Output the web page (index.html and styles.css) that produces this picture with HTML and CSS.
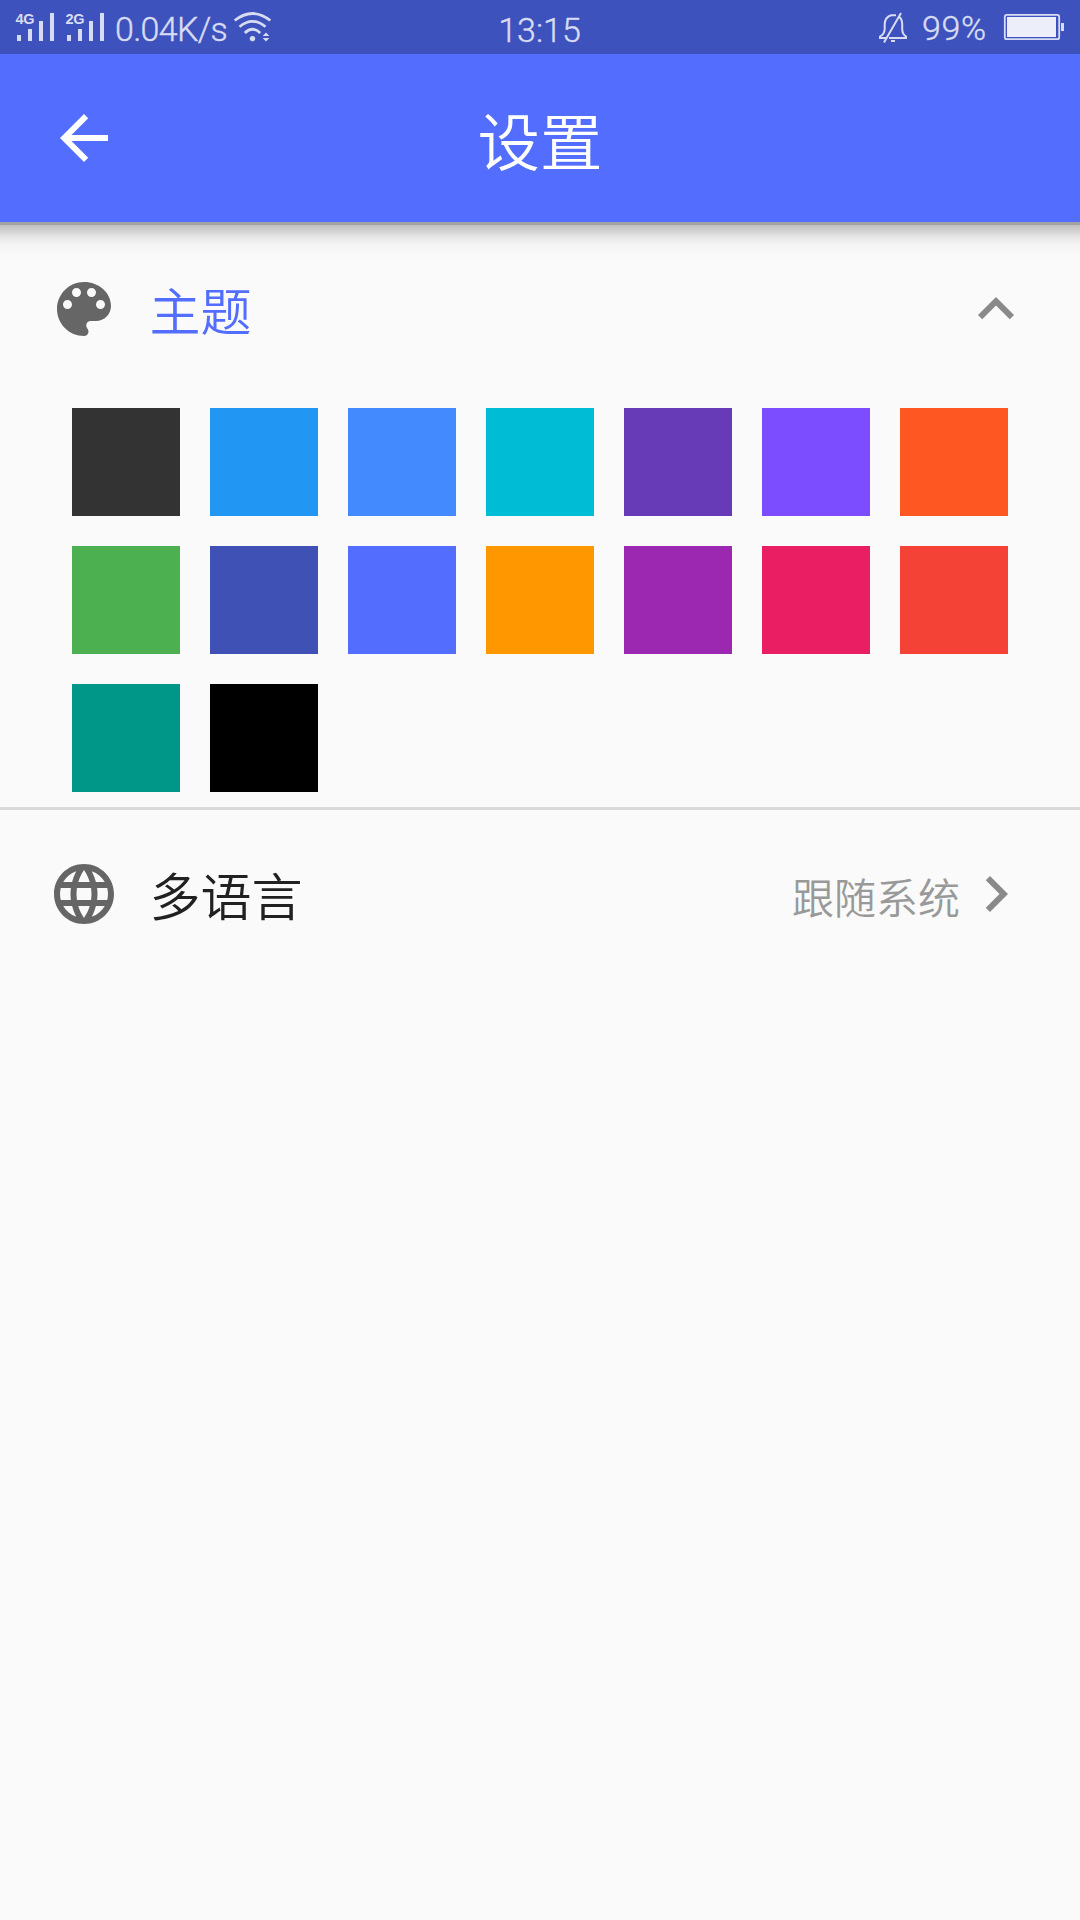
FILE: index.html
```html
<!DOCTYPE html>
<html lang="zh-CN">
<head>
<meta charset="utf-8">
<title>设置</title>
<link rel="stylesheet" href="styles.css">
</head>
<body>
<div class="status">
  <div class="status-side">
    <svg class="signals" width="92" height="54" viewBox="14 0 92 54" fill="currentColor">
      <text class="net" x="15.500" y="24">4G</text>
      <path d="M17 35h4v6h-4zM28 29h4v12h-4zM39 21h4v20h-4zM50 13h4v28h-4z"/>
      <text class="net" x="65.500" y="24">2G</text>
      <path d="M67 35h4v6h-4zM78 29h4v12h-4zM89 21h4v20h-4zM100 13h4v28h-4z"/>
    </svg>
    <span class="reading speed">0.04K/s</span>
    <svg class="wifi" width="40" height="54" viewBox="232 0 40 54" fill="none" stroke="currentColor" stroke-width="2.700">
      <path d="M234.700 20.500Q252.500 6.500 270.300 20.500M239.500 26.700Q252.500 16 265.500 26.700M244.800 33Q252.500 25.500 260.200 33"/>
      <circle cx="252.500" cy="38.600" r="2.700" fill="currentColor" stroke="none"/>
      <path d="M262.700 36l3.300-3.500 3.300 3.500zM262.700 38l3.300 3.500 3.300-3.500z" fill="currentColor" stroke="none"/>
    </svg>
  </div>
  <span class="reading clock">13:15</span>
  <div class="status-side status-end">
    <svg width="30" height="54" viewBox="878 0 30 54" fill="none" stroke="currentColor" stroke-width="2">
      <path d="M889 38H906V36.500Q902.200 34 902.200 29V24Q902 18.500 898.500 16.200M896 15.200H891Q884.800 17.500 884.700 24V29Q884.500 34 880 36.500V38H886M884 42.500L901 13M891 41h4"/>
    </svg>
    <span class="reading level">99%</span>
    <svg width="62" height="54" viewBox="1003 0 62 54">
      <rect x="1004.800" y="14.800" width="54.400" height="24.400" rx="2" fill="none" stroke="currentColor" stroke-width="1.800"/>
      <path d="M1007 17h49v20h-49z" fill="#eceef9"/>
      <path d="M1061 23h3v8h-3z" fill="currentColor"/>
    </svg>
  </div>
</div>
<header class="appbar">
  <svg class="icon" viewBox="0 0 24 24"><path d="M20 11H7.830l5.590-5.590L12 4l-8 8 8 8 1.410-1.410L7.830 13H20v-2z"/></svg>
  <h1 class="title">设置</h1>
</header>
<main>
  <section class="theme">
    <div class="row">
      <svg class="icon" viewBox="0 0 24 24"><path d="M12 3c-4.970 0-9 4.030-9 9s4.030 9 9 9c.83 0 1.500-.67 1.500-1.500 0-.39-.15-.74-.39-1.010-.23-.26-.38-.61-.38-.99 0-.83.67-1.500 1.500-1.500H16c2.760 0 5-2.240 5-5 0-4.420-4.030-8-9-8zm-5.500 9c-.83 0-1.500-.67-1.500-1.500S5.670 9 6.500 9 8 9.670 8 10.500 7.330 12 6.500 12zm3-4C8.670 8 8 7.330 8 6.500S8.670 5 9.500 5s1.500.67 1.500 1.500S10.330 8 9.500 8zm5 0c-.83 0-1.500-.67-1.500-1.500S13.670 5 14.500 5s1.500.67 1.500 1.500S15.330 8 14.500 8zm3 4c-.83 0-1.500-.67-1.500-1.500S16.670 9 17.500 9s1.500.67 1.500 1.500-.67 1.500-1.500 1.500z"/></svg>
      <span class="label label-active">主题</span>
      <svg class="icon chevron" viewBox="0 0 24 24"><path d="M12 8l-6 6 1.410 1.410L12 10.830l4.590 4.580L18 14z"/></svg>
    </div>
    <div class="swatches">
      <div class="swatch grey"></div>
      <div class="swatch blue"></div>
      <div class="swatch blue-accent"></div>
      <div class="swatch cyan"></div>
      <div class="swatch deep-purple"></div>
      <div class="swatch deep-purple-accent"></div>
      <div class="swatch deep-orange"></div>
      <div class="swatch green"></div>
      <div class="swatch indigo"></div>
      <div class="swatch indigo-accent"></div>
      <div class="swatch orange"></div>
      <div class="swatch purple"></div>
      <div class="swatch pink"></div>
      <div class="swatch red"></div>
      <div class="swatch teal"></div>
      <div class="swatch black"></div>
    </div>
  </section>
  <div class="row">
    <svg class="icon" viewBox="0 0 24 24"><path d="M11.990 2C6.470 2 2 6.480 2 12s4.470 10 9.990 10C17.520 22 22 17.520 22 12S17.520 2 11.990 2zm6.930 6h-2.950c-.32-1.250-.78-2.450-1.380-3.560 1.840.63 3.370 1.910 4.330 3.560zM12 4.040c.83 1.200 1.480 2.530 1.910 3.960h-3.820c.43-1.430 1.080-2.760 1.910-3.960zM4.260 14C4.100 13.360 4 12.690 4 12s.1-1.360.26-2h3.380c-.08.66-.14 1.320-.14 2 0 .68.06 1.340.14 2H4.260zm.82 2h2.950c.32 1.250.78 2.450 1.380 3.560-1.840-.63-3.370-1.900-4.330-3.560zm2.950-8H5.080c.96-1.660 2.490-2.930 4.330-3.560C8.810 5.550 8.350 6.750 8.030 8zM12 19.960c-.83-1.200-1.480-2.530-1.910-3.960h3.820c-.43 1.430-1.080 2.760-1.910 3.960zM14.340 14H9.660c-.09-.66-.16-1.320-.16-2 0-.68.07-1.350.16-2h4.680c.09.65.16 1.320.16 2 0 .68-.07 1.340-.16 2zm.25 5.560c.6-1.110 1.060-2.310 1.380-3.560h2.950c-.96 1.650-2.490 2.930-4.330 3.560zM16.360 14c.08-.66.14-1.320.14-2 0-.68-.06-1.340-.14-2h3.380c.16.64.26 1.310.26 2s-.1 1.360-.26 2h-3.380z"/></svg>
    <span class="label">多语言</span>
    <span class="value">跟随系统</span>
    <svg class="icon chevron" viewBox="0 0 24 24"><path d="M10 6L8.590 7.410 13.170 12l-4.580 4.590L10 18l6-6z"/></svg>
  </div>
</main>
</body>
</html>
```
FILE: styles.css
```css
* { box-sizing: border-box; }
body {
  margin: 0;
  min-height: 1920px;
  background: #fafafa;
  font-family: "Noto Sans CJK SC", sans-serif;
  font-weight: 350;
}
svg { display: block; flex: none; }
.status {
  height: 54px;
  padding: 0 15px 0 14px;
  display: grid;
  grid-template-columns: 1fr auto 1fr;
  grid-template-rows: 54px;
  align-items: center;
  background: #3d52bc;
  color: #d8dcf2;
  font-family: Roboto, sans-serif;
  font-size: 34px;
  line-height: 48px;
  white-space: nowrap;
}
.status-side { display: flex; align-items: center; }
.status-end { justify-content: flex-end; }
.net { font: bold 14.500px "Liberation Sans", sans-serif; letter-spacing: -.3px; }
.reading { -webkit-text-stroke: .4px currentColor; }
.speed {
  width: 126px;
  padding: 4px 0 0 9px;
  letter-spacing: -.7px;
}
.clock { padding-top: 5px; }
.level {
  width: 95px;
  padding: 2px 0 0 14px;
  letter-spacing: .7px;
}
.appbar {
  position: relative;
  height: 168px;
  padding: 0 48px;
  display: grid;
  grid-template-columns: 72px 1fr 72px;
  align-items: center;
  background: #536dfe;
  color: #fff;
}
.appbar::after {
  content: "";
  position: absolute;
  top: 100%;
  left: 0;
  right: 0;
  height: 33px;
  background: linear-gradient(#a2a2a2 3px, #c0c0c0 3px, #d2d2d2 9px, #e6e6e6 15px, #f3f3f3 22px, #fafafa);
}
.title {
  margin: 0;
  padding-top: 2px;
  font-size: 62.500px;
  font-weight: inherit;
  line-height: 80px;
  text-align: center;
}
.icon { width: 72px; height: 72px; fill: currentColor; }
.row {
  height: 168px;
  padding: 0 48px;
  display: flex;
  align-items: center;
  color: #666;
}
.label {
  margin-left: 29.500px;
  flex: 1;
  color: #212121;
  font-size: 51px;
  line-height: 72px;
}
.label-active { color: #536dfe; }
.value {
  padding-top: 3px;
  color: #999;
  font-size: 42px;
  line-height: 72px;
}
.chevron { color: #8a8a8a; }
.theme { padding: 3px 0 15px; border-bottom: 3px solid #dadada; }
.swatches {
  padding: 15px 72px 0;
  display: grid;
  grid-template-columns: repeat(7, 108px);
  grid-auto-rows: 108px;
  gap: 30px;
}
.grey { background: #333; }
.blue { background: #2196f3; }
.blue-accent { background: #448aff; }
.cyan { background: #00bcd4; }
.deep-purple { background: #673ab7; }
.deep-purple-accent { background: #7c4dff; }
.deep-orange { background: #ff5722; }
.green { background: #4caf50; }
.indigo { background: #3f51b5; }
.indigo-accent { background: #536dfe; }
.orange { background: #ff9800; }
.purple { background: #9c27b0; }
.pink { background: #e91e63; }
.red { background: #f44336; }
.teal { background: #009688; }
.black { background: #000; }
```
